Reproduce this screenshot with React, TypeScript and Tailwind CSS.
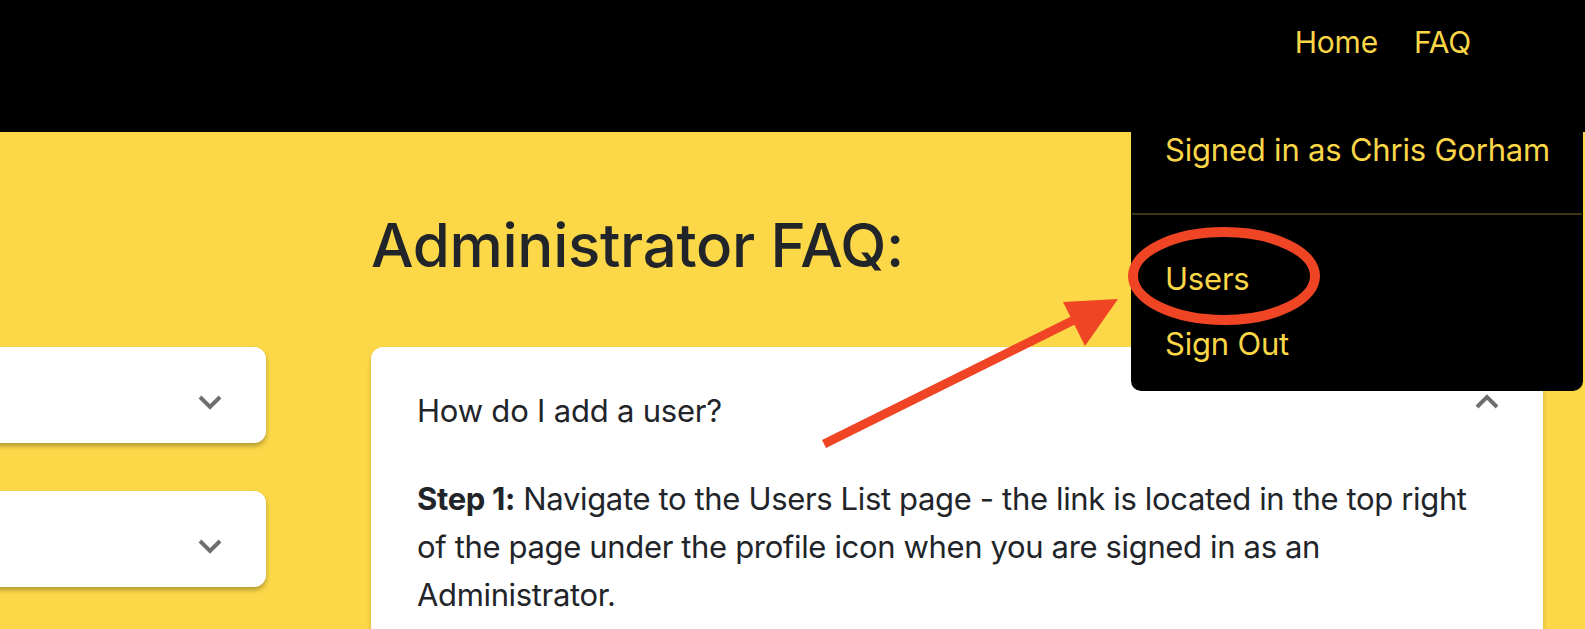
import React from "react";

function ChevronDown() {
  return (
    <svg width="24" height="16" viewBox="0 0 24 16" className="block">
      <path d="M2 3 L12 13 L22 3" fill="none" stroke="#6f6f6f" strokeWidth="4" />
    </svg>
  );
}

function ChevronUp() {
  return (
    <svg width="24" height="16" viewBox="0 0 24 16" className="block">
      <path d="M2 13 L12 3 L22 13" fill="none" stroke="#6f6f6f" strokeWidth="4" />
    </svg>
  );
}

function SideCard() {
  return (
    <div className="h-[96px] bg-white rounded-[12px] shadow-[0_3px_5px_rgba(0,0,0,0.3)] flex justify-end pr-[44px] pt-[47px]">
      <ChevronDown />
    </div>
  );
}

export default function App() {
  return (
    <div
      className="relative w-[1585px] h-[629px] overflow-hidden bg-[#fcd848] text-[#212529]"
      style={{ fontFamily: "Inter, 'Noto Sans', sans-serif" }}
    >
      <header className="h-[132px] bg-black flex justify-end pr-[114px] pt-[18px]">
        <nav className="flex gap-[36px] text-[30px] leading-[48px] tracking-[-0.2px] text-[#fbd647]">
          <span>Home</span>
          <span>FAQ</span>
        </nav>
      </header>

      <main className="flex">
        <div className="-ml-[20px] w-[286px] pt-[215px] flex flex-col gap-[48px] shrink-0">
          <SideCard />
          <SideCard />
        </div>
        <div className="ml-[105px] w-[1172px] shrink-0">
          <h1 className="mt-[77px] text-[60px] leading-[72px] font-medium tracking-[-0.3px]">
            Administrator FAQ:
          </h1>
          <div className="mt-[66px] bg-white rounded-[12px] h-[400px] shadow-[0_3px_5px_rgba(0,0,0,0.2)]">
            <div className="flex justify-between pl-[46px] pr-[44px]">
              <div className="pt-[40px] text-[31px] leading-[48px] tracking-[-0.2px]">How do I add a user?</div>
              <div className="pt-[47px]">
                <ChevronUp />
              </div>
            </div>
            <p className="pl-[46px] pr-[30px] pt-[40px] text-[31px] leading-[48px] tracking-[-0.35px]">
              <b className="font-bold">Step 1:</b> Navigate to the Users List page - the link is located in the top right
              <br />
              of the page under the profile icon when you are signed in as an
              <br />
              Administrator.
            </p>
          </div>
        </div>
      </main>

      {/* Dropdown menu */}
      <div className="absolute top-[110px] left-[1131px] w-[452px] bg-black border border-[rgba(0,0,0,0.18)] rounded-[10px] text-[#fbd647] text-[31px] leading-[48px] tracking-[-0.2px] flex flex-col pt-[15px] pb-[22px]">
        <div className="pl-[33px] whitespace-nowrap">Signed in as Chris Gorham</div>
        <div className="mt-[39px] h-[2px] bg-[#3e3512]" />
        <div className="pl-[33px] mt-[40px]">Users</div>
        <div className="pl-[33px] mt-[17px]">Sign Out</div>
      </div>

      {/* Annotation overlay */}
      <svg className="absolute inset-0 pointer-events-none" width="1585" height="629" viewBox="0 0 1585 629">
        <ellipse cx="1224" cy="276" rx="91" ry="44" fill="none" stroke="#f04524" strokeWidth="10" />
        <line x1="824" y1="444" x2="1078" y2="318" stroke="#f04524" strokeWidth="9" />
        <polygon points="1063,302 1118,299 1085,346" fill="#f04524" />
      </svg>
    </div>
  );
}
